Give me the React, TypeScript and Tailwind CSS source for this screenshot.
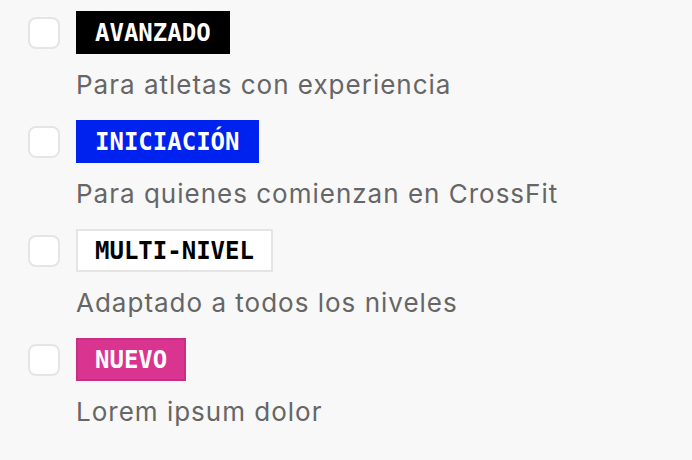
import React from "react";
import { useState } from "react";

type Level = { id: string, label: string, description: string, badgeClass: string };

const levels: Level[] = [
	{ id: "avanzado", label: "AVANZADO", description: "Para atletas con experiencia", badgeClass: "bg-black text-white border-black" },
	{ id: "iniciacion", label: "INICIACIÓN", description: "Para quienes comienzan en CrossFit", badgeClass: "bg-[#0022ee] text-white border-[#0022ee]" },
	{ id: "multi", label: "MULTI-NIVEL", description: "Adaptado a todos los niveles", badgeClass: "bg-white text-black border-[#e5e5e5]" },
	{ id: "nuevo", label: "NUEVO", description: "Lorem ipsum dolor", badgeClass: "bg-[#d9348f] text-white border-[#c92e84]" },
];

function LevelRow(props: { level: Level }) {
	const level = props.level;
	const [checked, setChecked] = useState(false);

	return (
	<label className="flex flex-row items-start gap-4 cursor-pointer">
		<input type="checkbox" checked={checked} onChange={() => setChecked(!checked)} className="sr-only" />
		<span className={`mt-[6px] w-8 h-8 rounded-lg border-2 border-[#e3e5e8] ${checked ? "bg-black" : "bg-white"}`} />
		<div className="flex flex-col items-start">
			<span className={`h-[43px] flex items-center px-[17px] border-2 font-['DejaVu_Sans_Mono',monospace] font-bold text-[24px] ${level.badgeClass}`}>
				{level.label}
			</span>
			<p className="mt-[14px] font-['Inter','Noto_Sans',sans-serif] text-[26px] leading-[34px] tracking-[1px] text-[#666666]">
				{level.description}
			</p>
		</div>
	</label>
	);
}

export default function App() {
	return (
	<div className="min-h-screen bg-[#f8f8f8] pl-7 pt-[11px]">
		<div className="flex flex-col gap-[18px]">
			{levels.map(l => <LevelRow key={l.id} level={l} />)}
		</div>
	</div>
	);
}
